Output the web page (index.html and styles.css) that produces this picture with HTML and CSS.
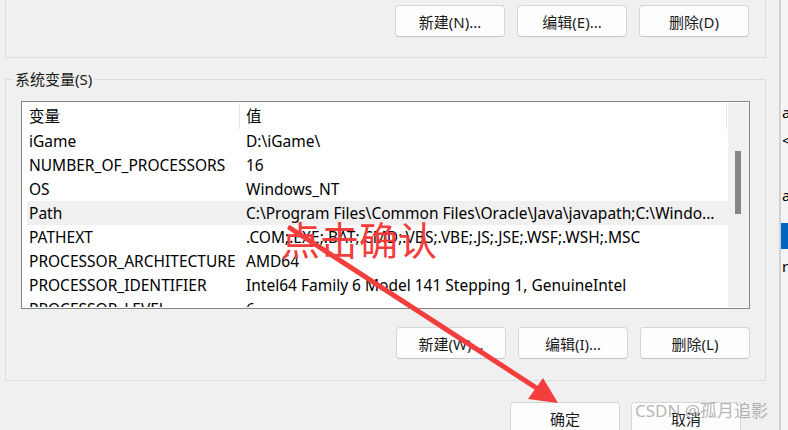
FILE: index.html
```html
<!DOCTYPE html>
<html lang="zh-CN">
<head>
<meta charset="utf-8">
<title>环境变量</title>
<link rel="stylesheet" href="styles.css">
</head>
<body>
<div class="screen">
  <div class="dialog">
    <div class="group group-top">
      <div class="btn-row">
        <button class="btn">新建(N)...</button>
        <button class="btn">编辑(E)...</button>
        <button class="btn">删除(D)</button>
      </div>
    </div>

    <div class="group group-sys">
      <span class="legend">系统变量(S)</span>
      <div class="list">
        <div class="list-body">
          <div class="list-head">
            <div class="hcell c1">变量</div>
            <div class="hcell c2">值</div>
          </div>
          <div class="row"><div class="c1">iGame</div><div class="c2">D:\iGame\</div></div>
          <div class="row"><div class="c1">NUMBER_OF_PROCESSORS</div><div class="c2">16</div></div>
          <div class="row"><div class="c1">OS</div><div class="c2">Windows_NT</div></div>
          <div class="row row-hover"><div class="c1">Path</div><div class="c2">C:\Program Files\Common Files\Oracle\Java\javapath;C:\Windo...</div></div>
          <div class="row"><div class="c1">PATHEXT</div><div class="c2">.COM;.EXE;.BAT;.CMD;.VBS;.VBE;.JS;.JSE;.WSF;.WSH;.MSC</div></div>
          <div class="row"><div class="c1">PROCESSOR_ARCHITECTURE</div><div class="c2">AMD64</div></div>
          <div class="row"><div class="c1">PROCESSOR_IDENTIFIER</div><div class="c2">Intel64 Family 6 Model 141 Stepping 1, GenuineIntel</div></div>
          <div class="row"><div class="c1">PROCESSOR_LEVEL</div><div class="c2">6</div></div>
        </div>
        <div class="vscroll"><div class="thumb"></div></div>
      </div>
      <div class="btn-row btn-row-sys">
        <button class="btn">新建(W)...</button>
        <button class="btn">编辑(I)...</button>
        <button class="btn">删除(L)</button>
      </div>
    </div>

    <div class="dlg-buttons">
      <button class="btn">确定</button>
      <button class="btn">取消</button>
    </div>
  </div>

  <div class="side">
    <div class="frag f1">a</div>
    <div class="frag f2">&lt;</div>
    <div class="frag f3">a</div>
    <div class="blue"></div>
    <div class="frag f4">r</div>
  </div>

  <svg class="arrow" width="788" height="430" viewBox="0 0 788 430" aria-hidden="true">
    <line x1="290" y1="228" x2="538" y2="389" stroke="#f43d3d" stroke-width="5" stroke-linecap="round"/>
    <polygon points="558,403 528,399 543,378" fill="#f43d3d"/>
  </svg>
  <span class="note">点击确认</span>
  <span class="watermark">CSDN @孤月追影</span>
</div>
</body>
</html>
```
FILE: styles.css
```css
* { box-sizing: border-box; }

body {
  margin: 0;
  background: #f0f0f0;
  font-family: "Noto Sans", "Noto Sans CJK SC", sans-serif;
  font-size: 15.5px;
  color: #000;
}

.screen {
  width: 788px;
  height: 430px;
  overflow: hidden;
  position: relative;
  display: flex;
}

.dialog {
  width: 779px;
  flex: none;
}

.group {
  border: 1px solid #dcdcdc;
  margin-left: 5px;
  width: 761px;
}

.group-top {
  margin-top: -10px;
  height: 68px;
  padding: 14px 16px 0 0;
}

.btn-row {
  display: flex;
  justify-content: flex-end;
  gap: 12px;
}

.btn {
  width: 110px;
  height: 32px;
  padding: 0;
  border: 1px solid #d6d6d6;
  border-bottom-color: #c4c4c4;
  border-radius: 4px;
  background: #fdfdfd;
  font-family: "Noto Sans", "Noto Sans CJK SC", sans-serif;
  font-size: 15px;
  color: #1a1a1a;
}

.group-sys {
  margin-top: 21px;
  height: 302px;
  position: relative;
  padding: 21px 15px 0 15px;
}

.legend {
  position: absolute;
  left: 7px;
  top: -11px;
  padding: 0 2px;
  background: #f0f0f0;
  line-height: 20px;
  font-size: 15px;
  color: #1a1a1a;
}

.list {
  height: 208px;
  border: 1px solid #868686;
  background: #fff;
  display: flex;
  padding: 1px 0;
  overflow: hidden;
}

.list-body {
  width: 706px;
  flex: none;
  padding-left: 5px;
  overflow: hidden;
}

.list-head {
  display: flex;
  height: 26px;
  line-height: 26px;
}

.hcell {
  border-right: 1px solid #e5e5e5;
}

.list-head .c1 { width: 213px; padding-left: 2px; }
.list-head .c2 { width: 487px; padding-left: 6px; }

.row {
  display: grid;
  grid-template-columns: 213px 487px;
  height: 24px;
  line-height: 24px;
  white-space: nowrap;
}

.row .c1 { padding-left: 2px; overflow: hidden; }
.row .c2 { padding-left: 6px; overflow: hidden; }

.row-hover { background: #f0f0f0; }

.vscroll {
  width: 21px;
  flex: none;
  background: #f0f0f0;
}

.thumb {
  margin: 48px 0 0 7px;
  width: 6px;
  height: 63px;
  background: #868686;
}

.btn-row-sys {
  margin-top: 18px;
}

.dlg-buttons {
  display: flex;
  justify-content: flex-end;
  gap: 11px;
  margin-top: 21px;
  padding-right: 38px;
}

.side {
  flex: none;
  width: 9px;
  border-left: 2px solid #d2d2d2;
  background: #f5f5f5;
  overflow: hidden;
  font-size: 15px;
  line-height: 20px;
  white-space: nowrap;
}

.frag { height: 20px; padding-left: 1px; }
.f1 { margin-top: 102px; }
.f2 { margin-top: 8px; }
.f3 { margin-top: 35px; }
.blue { margin-top: 18px; height: 26px; background: #0067c0; }
.f4 { margin-top: 7px; }

.arrow {
  position: absolute;
  left: 0;
  top: 0;
  pointer-events: none;
}

.note {
  position: absolute;
  left: 281px;
  top: 218px;
  font-family: "Noto Sans CJK SC", sans-serif;
  font-size: 39px;
  line-height: 40px;
  color: #f43d3d;
  white-space: nowrap;
}

.watermark {
  position: absolute;
  left: 635px;
  top: 402px;
  font-family: "Noto Sans", "Noto Sans CJK SC", sans-serif;
  font-size: 17px;
  line-height: 17px;
  color: rgba(140, 140, 140, 0.65);
  white-space: nowrap;
}
```
